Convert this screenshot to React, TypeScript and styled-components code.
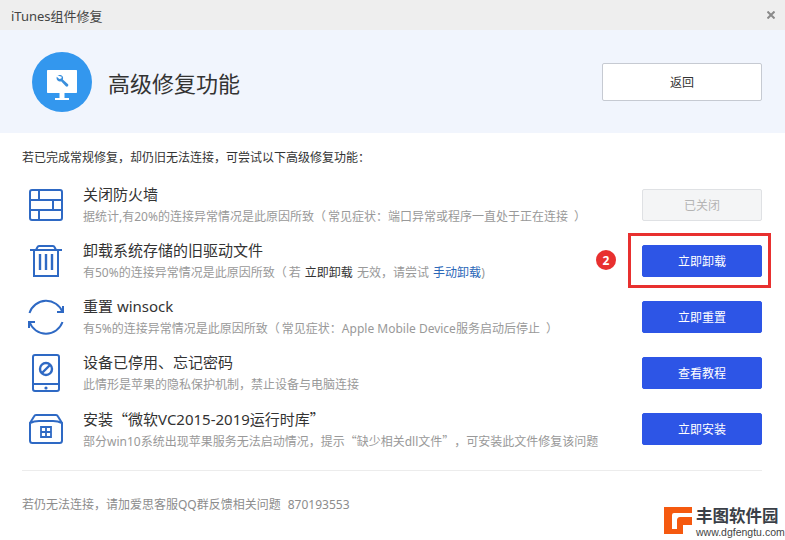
import type { FC, ReactNode } from 'react'
import styled, { createGlobalStyle } from 'styled-components'

const GlobalStyle = createGlobalStyle`
  html, body {
    margin: 0;
    padding: 0;
    background: #fff;
  }
  body {
    font-family: "Noto Sans", "Noto Sans CJK SC", sans-serif;
    text-spacing-trim: space-all;
  }
  * {
    box-sizing: border-box;
  }
`

const BLUE = '#2e69c4'

const Window = styled.div`
  position: relative;
  width: 785px;
  height: 540px;
  overflow: hidden;
  background: #fff;
  color: #333;
`

const TitleBar = styled.div`
  height: 30px;
  padding: 0 10px 0 11px;
  display: flex;
  align-items: center;
  justify-content: space-between;
  background: #eeeeee;
  font-size: 13px;
  color: #444;
`

const Header = styled.div`
  height: 103px;
  padding: 0 23px 0 32px;
  display: flex;
  align-items: center;
  background: #f1f5fd;
`

const HeaderTitle = styled.h1`
  flex: 1;
  margin: 0 0 0 16px;
  font-size: 22px;
  font-weight: 400;
  color: #333;
`

const BackButton = styled.div`
  width: 160px;
  height: 38px;
  display: flex;
  align-items: center;
  justify-content: center;
  background: #fff;
  border: 1px solid #c6cad2;
  border-radius: 2px;
  font-size: 12px;
  color: #333;
`

const Body = styled.div`
  padding: 16px 23px 0 22px;
`

const Intro = styled.div`
  height: 18px;
  line-height: 18px;
  font-size: 12px;
  color: #333;
`

const List = styled.div`
  margin-top: 10px;
  padding-bottom: 13px;
  border-bottom: 1px solid #ececec;
`

const Row = styled.div`
  height: 56px;
  display: flex;
  align-items: center;
`

const IconCell = styled.div`
  width: 48px;
  display: flex;
  justify-content: center;
  align-items: center;
`

const RowText = styled.div`
  flex: 1;
  margin-left: 13px;
  min-width: 0;
`

const RowTitle = styled.div`
  height: 21px;
  line-height: 21px;
  font-size: 15px;
  color: #333;
`

const RowDesc = styled.div`
  height: 19px;
  margin-top: 2px;
  line-height: 19px;
  font-size: 12px;
  color: #999;
  white-space: nowrap;
`

const DarkWord = styled.span`
  margin: 0 1px;
  color: #333;
`

const LinkWord = styled.span`
  margin-left: 1px;
  color: #2a67b8;
`

const OpenParen = styled.span`
  margin-right: 2px;
`

const CloseParen = styled.span`
  margin-left: 6px;
`

const Quote = styled.span`
  font-family: "Noto Sans CJK SC", sans-serif;
`

const ActionCell = styled.div`
  position: relative;
  width: 120px;
  flex: none;
`

const ActionButton = styled.div<{ $disabled?: boolean }>`
  height: 32px;
  display: flex;
  align-items: center;
  justify-content: center;
  border-radius: 2px;
  font-size: 12px;
  background: ${({ $disabled }) => ($disabled ? '#f4f5f6' : '#2d55e6')};
  border: 1px solid ${({ $disabled }) => ($disabled ? '#dfe1e4' : '#2d55e6')};
  color: ${({ $disabled }) => ($disabled ? '#b4b4b4' : '#fff')};
`

const RedFrame = styled.div`
  position: absolute;
  left: -14px;
  top: -12px;
  width: 143px;
  height: 55px;
  border: 3px solid #e8302f;
`

const StepBadge = styled.div`
  position: absolute;
  left: -46px;
  top: 5px;
  width: 20px;
  height: 20px;
  border-radius: 50%;
  display: flex;
  align-items: center;
  justify-content: center;
  background: #e8302f;
  color: #fff;
  font-size: 12px;
  font-weight: 700;
`

const Footer = styled.div`
  margin-top: 25px;
  font-size: 12px;
  line-height: 18px;
  color: #8c8c8c;
`

const FooterNumber = styled.span`
  margin-left: 7px;
`

const Watermark = styled.div`
  position: absolute;
  left: 664px;
  top: 506px;
  display: flex;
  align-items: flex-start;
  gap: 4px;
`

const WatermarkText = styled.div`
  display: flex;
  flex-direction: column;
`

const WatermarkName = styled.div`
  height: 20px;
  font-size: 16.5px;
  line-height: 20px;
  font-weight: 700;
  color: #3a3f47;
`

const WatermarkUrl = styled.div`
  height: 12px;
  font-family: "Liberation Sans", sans-serif;
  font-size: 10.5px;
  line-height: 12px;
  color: #444;
`

const LogoSvg = styled.svg`
  margin-top: 1px;
`

const CloseIcon = () => (
  <svg width="8" height="8" viewBox="0 0 8 8" fill="none" stroke="#8a8a8a" strokeWidth="2">
    <path d="M.5.5l7 7M7.5.5l-7 7" />
  </svg>
)

const FirewallIcon = () => (
  <svg width="34" height="32" viewBox="0 0 34 32" fill="none" stroke={BLUE} strokeWidth="2">
    <rect x="1" y="1" width="32" height="30" rx="2" />
    <path d="M1 11h32M1 21h32M10 1v10M24 11v10M10 21v10" />
  </svg>
)

const TrashIcon = () => (
  <svg width="32" height="32" viewBox="0 0 32 32" fill="none" stroke={BLUE} strokeWidth="2">
    <path d="M0 5h32M6 5l1.500-3c.3-.7.8-1 1.500-1h14c.7 0 1.200.3 1.500 1L26 5" />
    <path d="M4 5v26h24V5" />
    <path d="M10 9v16M16 9v16M22 9v16" strokeWidth="2.4" />
  </svg>
)

const RefreshIcon = () => (
  <svg width="36" height="36" viewBox="0 0 36 36" fill="none" stroke={BLUE} strokeWidth="2">
    <path d="M1.500 14A17.500 17.500 0 0 1 34.500 13" />
    <path d="M34.500 23A17.500 17.500 0 0 1 1.500 23" />
    <path d="M29 13h6V7M7 23H1v6" />
  </svg>
)

const TabletIcon = () => (
  <svg width="28" height="38" viewBox="0 0 28 38" fill="none" stroke={BLUE} strokeWidth="2">
    <rect x="1" y="1" width="26" height="36" rx="2" />
    <path d="M1 30h26" />
    <circle cx="14" cy="34" r="1.6" fill={BLUE} stroke="none" />
    <circle cx="14" cy="15" r="6" strokeWidth="2.4" />
    <path d="M10 19l8-8" strokeWidth="2.4" />
  </svg>
)

const BoxIcon = () => (
  <svg width="34" height="30" viewBox="0 0 34 30" fill="none" stroke={BLUE} strokeWidth="2">
    <path d="M1 9l4-6.500C5.500 1.500 6 1 7 1h20c1 0 1.500.5 2 1.500L33 9" />
    <path d="M1 9c3-1.500 6-2 9-2h14c3 0 6 .5 9 2v17.500c0 1.500-1 2.500-2.500 2.500h-27C2 29 1 28 1 26.500z" />
    <path d="M12 13h10v10H12zM17 13v10M12 18h10" strokeWidth="1.8" />
  </svg>
)

const RepairIcon = () => (
  <svg width="60" height="60" viewBox="0 0 60 60">
    <circle cx="30" cy="30" r="30" fill="#3397ee" />
    <path d="M15 19c0-.6.400-1 1-1h28c.6 0 1 .4 1 1v21c0 .6-.4 1-1 1H16c-.6 0-1-.4-1-1z" fill="#fff" />
    <path d="M27.5 41h5v5h-5z" fill="#fff" />
    <path d="M23 46h14v2H23z" fill="#fff" />
    <path
      d="M25.500 23.500c1.800-1 4-.6 5 .8.700 1 .8 2.200.3 3.300l5 4.500c.7.700.7 1.500.1 2.100-.7.700-1.500.6-2.100 0l-4.700-5c-1.200.4-2.500.2-3.500-.7-1-1-1.300-2.400-.8-3.700l2.500 2.300 2-.6.5-1.800z"
      fill="#3a8fdc"
    />
  </svg>
)

const LogoMark = () => (
  <LogoSvg width="28" height="27" viewBox="0 0 28 27">
    <path d="M0 0h28v6H10a2 2 0 0 0-2 2v14h5V13c0-1.500 1-3 3-3h12v8H19v9H0z" fill="#f5590f" />
  </LogoSvg>
)

type ActionRow = {
  icon: ReactNode
  title: ReactNode
  desc: ReactNode
  action: string
  disabled?: boolean
  marked?: boolean
}

const rows: ActionRow[] = [
  {
    icon: <FirewallIcon />,
    title: '关闭防火墙',
    desc: (
      <>
        据统计,有20%的连接异常情况是此原因所致<OpenParen>（</OpenParen>常见症状：端口异常或程序一直处于正在连接
        <CloseParen>）</CloseParen>
      </>
    ),
    action: '已关闭',
    disabled: true,
  },
  {
    icon: <TrashIcon />,
    title: '卸载系统存储的旧驱动文件',
    desc: (
      <>
        有50%的连接异常情况是此原因所致<OpenParen>（</OpenParen>若 <DarkWord>立即卸载</DarkWord> 无效，请尝试{' '}
        <LinkWord>手动卸载</LinkWord>)
      </>
    ),
    action: '立即卸载',
    marked: true,
  },
  {
    icon: <RefreshIcon />,
    title: '重置 winsock',
    desc: (
      <>
        有5%的连接异常情况是此原因所致<OpenParen>（</OpenParen>常见症状：Apple Mobile Device服务启动后停止
        <CloseParen>）</CloseParen>
      </>
    ),
    action: '立即重置',
  },
  {
    icon: <TabletIcon />,
    title: '设备已停用、忘记密码',
    desc: '此情形是苹果的隐私保护机制，禁止设备与电脑连接',
    action: '查看教程',
  },
  {
    icon: <BoxIcon />,
    title: (
      <>
        安装<Quote>“</Quote>微软VC2015-2019运行时库<Quote>”</Quote>
      </>
    ),
    desc: (
      <>
        部分win10系统出现苹果服务无法启动情况，提示<Quote>“</Quote>缺少相关dll文件<Quote>”</Quote>，可安装此文件修复该问题
      </>
    ),
    action: '立即安装',
  },
]

const App: FC = () => (
  <Window>
    <GlobalStyle />
    <TitleBar>
      <span>iTunes组件修复</span>
      <CloseIcon />
    </TitleBar>
    <Header>
      <RepairIcon />
      <HeaderTitle>高级修复功能</HeaderTitle>
      <BackButton>返回</BackButton>
    </Header>
    <Body>
      <Intro>若已完成常规修复，却仍旧无法连接，可尝试以下高级修复功能：</Intro>
      <List>
        {rows.map((row) => (
          <Row key={row.action}>
            <IconCell>{row.icon}</IconCell>
            <RowText>
              <RowTitle>{row.title}</RowTitle>
              <RowDesc>{row.desc}</RowDesc>
            </RowText>
            <ActionCell>
              {row.marked && <StepBadge>2</StepBadge>}
              {row.marked && <RedFrame />}
              <ActionButton $disabled={row.disabled}>{row.action}</ActionButton>
            </ActionCell>
          </Row>
        ))}
      </List>
      <Footer>
        若仍无法连接，请加爱思客服QQ群反馈相关问题<FooterNumber>870193553</FooterNumber>
      </Footer>
    </Body>
    <Watermark>
      <LogoMark />
      <WatermarkText>
        <WatermarkName>丰图软件园</WatermarkName>
        <WatermarkUrl>www.dgfengtu.com</WatermarkUrl>
      </WatermarkText>
    </Watermark>
  </Window>
)

export default App
